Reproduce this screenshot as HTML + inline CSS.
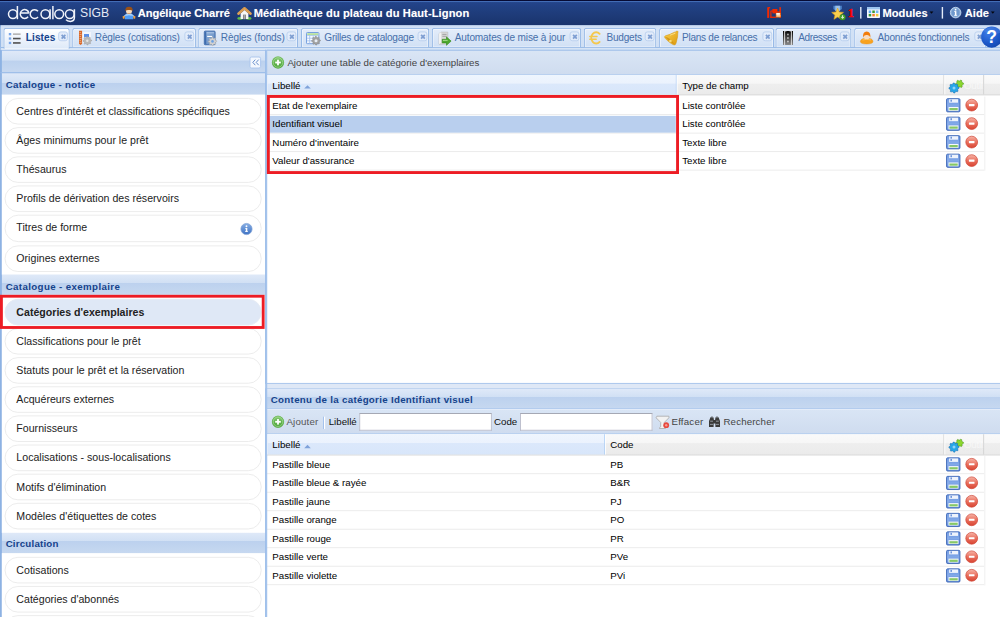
<!DOCTYPE html>
<html><head><meta charset="utf-8"><title>decalog SIGB</title>
<style>
*{box-sizing:border-box;margin:0;padding:0}
html,body{width:1000px;height:617px;overflow:hidden;background:#fff}
#w{position:absolute;left:0;top:0;width:1132px;height:699px;transform:scale(0.8834);transform-origin:0 0;font-family:"Liberation Sans",sans-serif;font-size:11px;color:#000;overflow:hidden;background:#fff}
#w div,#w span,#w svg,#w i{position:absolute}
.nw{white-space:nowrap}
#top{left:0;top:0;width:1132px;height:30px;background:linear-gradient(#05082e 0,#080d3a 1px,#4672bc 1.15px,#3e66b0 2.2px,#26488e 2.6px,#23438a 3.4px,#1f3d7c 14px,#1a346c 28.9px)}
#top .t{color:#fff;font-weight:bold;font-size:12.6px;top:7.6px;white-space:nowrap;text-shadow:0 0 1px rgba(255,255,255,.35)}
#tabs{width:1132px;height:29px;border-left:1.2px solid #8db2e3;background:linear-gradient(#c3d7f1 0,#d3e2f6 2px,#cfdff4 100%)}
#tabs .strip{left:0;top:25px;width:1132px;height:4px;background:#dce8f8;border-top:1px solid #8db2e3}
.tab{top:3px;height:22px;border:1px solid #8db2e3;border-bottom:none;border-radius:3px 3px 0 0;background:linear-gradient(#e4edfa,#d0e0f5);color:#4870aa;font-size:11.4px;white-space:nowrap;box-shadow:inset 0 0 0 1px rgba(255,255,255,.6)}
.tab.on{background:linear-gradient(#ffffff,#edf3fc 50%,#dde9f8);height:24px;color:#15428b;font-weight:bold}
.tab span{top:4.3px}
.tab i{top:3px;right:1px;width:11px;height:11px;border:1px solid #b9cfee;border-radius:3px;background:#e3ecfa}
.tab i:before,.tab i:after{content:"";position:absolute;left:1.5px;top:3.5px;width:6px;height:2px;background:#7f9fd2;transform:rotate(45deg)}
.tab i:after{transform:rotate(-45deg)}
.ph{background:linear-gradient(#dfe9f8 0,#d1e0f4 var(--b,41%),#bcd1ee calc(var(--b,41%) + 2%),#c6d8f0 100%);border:1px solid #99bbe8;color:#15428b;font-weight:bold;font-size:11px}
.ph span{white-space:nowrap}
.mi{border:1.8px solid #e9e9e9;background:#fff;font-size:12px;color:#222}
.mi span{left:12.3px;white-space:nowrap}
.tb{background:linear-gradient(#d9e5f5,#cfdcef);border-bottom:1px solid #94b8e8;color:#333}
.hd{background:linear-gradient(#fafafa 0,#f6f6f6 43%,#eeeeee 46%,#ebebeb 100%);border-bottom:1px solid #d0d0d0;font-size:11px}
.hc{top:0;height:100%;overflow:hidden;border-right:1px solid #d0d0d0;border-left:1px solid #fff}
.hc.s{background:linear-gradient(#eef5fe 0,#ebf2fd 43%,#dbe8fb 45%,#d8e6fa 100%);border-right-color:#aaccf6}
.hc span{top:5.7px;white-space:nowrap}
.row{border-bottom:1px solid #e9e9e9;font-size:11px}
.row span{top:4.1px;white-space:nowrap}
.row .selc{background:#b9cfee}
.inp{background:#fff;border:1px solid #b5b8c8;border-top-color:#9a9dab}
</style></head><body><div id="w">
<div id="top">
<div class="t" style="left:155.8px;letter-spacing:-0.027px">Angélique Charré</div>
<div class="t" style="left:287.2px;letter-spacing:0.113px">Médiathèque du plateau du Haut-Lignon</div>
<div class="t" style="left:998.9px;letter-spacing:0.041px">Modules</div>
<div class="t" style="left:1092.0px;letter-spacing:0.079px">Aide</div>
<div class="nw" style="left:90.6px;top:7.4px;font-size:13.8px;color:#e4e9f5;letter-spacing:0">SIGB</div>
</div>
<div id="tabs" style="left:0px;top:28px;transform:translate(0.00px,0.41px);"><div class="strip"></div>
<div class="tab on" style="left:2px;transform:translate(0.88px,.2px);width:75px"><span style="left:24.4px;letter-spacing:0.074px">Listes</span><i></i></div>
<div class="tab" style="left:80px;transform:translate(0.76px,.2px);width:140px"><span style="left:24.6px;letter-spacing:-0.194px">Règles (cotisations)</span><i></i></div>
<div class="tab" style="left:223px;transform:translate(0.39px,.2px);width:113px"><span style="left:24.6px;letter-spacing:-0.121px">Règles (fonds)</span><i></i></div>
<div class="tab" style="left:339px;transform:translate(0.76px,.2px);width:145px"><span style="left:25.4px;letter-spacing:-0.276px">Grilles de catalogage</span><i></i></div>
<div class="tab" style="left:487px;transform:translate(0.82px,.2px);width:169px"><span style="left:25.0px;letter-spacing:-0.179px">Automates de mise à jour</span><i></i></div>
<div class="tab" style="left:659px;transform:translate(0.88px,.2px);width:82px"><span style="left:24.6px;letter-spacing:-0.251px">Budgets</span><i></i></div>
<div class="tab" style="left:745px;transform:translate(0.12px,.2px);width:130px"><span style="left:25.0px;letter-spacing:-0.323px">Plans de relances</span><i></i></div>
<div class="tab" style="left:876px;transform:translate(0.77px,.2px);width:86px"><span style="left:24.9px;letter-spacing:-0.493px">Adresses</span><i></i></div>
<div class="tab" style="left:965px;transform:translate(0.97px,.2px);width:149px"><span style="left:25.4px;letter-spacing:-0.255px">Abonnés fonctionnels</span><i></i></div>
</div>
<div style="left:0px;top:56px;transform:translate(0.00px,0.49px);width:301px;height:657px;border-left:2.3px solid #8db2e3;border-right:1.4px solid #99bbe8;background:#fff"></div>
<div class="ph" style="--b:45%;left:0px;top:56px;transform:translate(0.00px,0.49px);width:301px;height:26px;border-left:2.3px solid #8db2e3"></div>
<div class="ph" style="--b:45%;left:0px;top:82px;transform:translate(0.00px,0.07px);width:301px;height:25px;border-left:2.3px solid #8db2e3;border-bottom:none"><span style="top:6.70px;left:4.4px;letter-spacing:0.350px">Catalogue - notice</span></div>
<div class="mi" style="left:5px;top:110px;transform:translate(0.21px,0.94px);width:291px;height:30px;border-radius:15.0px;"><span style="top:7.37px">Centres d'intérêt et classifications spécifiques</span></div>
<div class="mi" style="left:5px;top:143px;transform:translate(0.21px,0.96px);width:291px;height:30px;border-radius:15.0px;"><span style="top:7.37px">Âges minimums pour le prêt</span></div>
<div class="mi" style="left:5px;top:176px;transform:translate(0.21px,0.98px);width:291px;height:30px;border-radius:15.0px;"><span style="top:7.37px">Thésaurus</span></div>
<div class="mi" style="left:5px;top:209px;transform:translate(0.21px,1.00px);width:291px;height:30px;border-radius:15.0px;"><span style="top:7.37px">Profils de dérivation des réservoirs</span></div>
<div class="mi" style="left:5px;top:243px;transform:translate(0.21px,0.04px);width:291px;height:31px;border-radius:15.5px;"><span style="top:7.37px">Titres de forme</span></div>
<div class="mi" style="left:5px;top:277px;transform:translate(0.21px,0.85px);width:291px;height:30px;border-radius:15.0px;"><span style="top:7.37px">Origines externes</span></div>
<div class="ph" style="--b:40%;left:0px;top:310px;transform:translate(0.00px,0.73px);width:301px;height:23px;border-left:2.3px solid #8db2e3;border-top:none;border-bottom:none"><span style="top:7.13px;left:4.4px;letter-spacing:0.422px">Catalogue - exemplaire</span></div>
<div class="mi" style="left:5px;top:338px;transform:translate(0.21px,0.35px);width:291px;height:30px;border-radius:15.0px;background:#dfe8f6;font-weight:bold;border-color:#e6ebf3;"><span style="top:7.37px">Catégories d'exemplaires</span></div>
<div class="mi" style="left:5px;top:371px;transform:translate(0.21px,0.34px);width:291px;height:30px;border-radius:15.0px;"><span style="top:7.37px">Classifications pour le prêt</span></div>
<div class="mi" style="left:5px;top:404px;transform:translate(0.21px,0.32px);width:291px;height:30px;border-radius:15.0px;"><span style="top:7.37px">Statuts pour le prêt et la réservation</span></div>
<div class="mi" style="left:5px;top:437px;transform:translate(0.21px,0.31px);width:291px;height:30px;border-radius:15.0px;"><span style="top:7.37px">Acquéreurs externes</span></div>
<div class="mi" style="left:5px;top:470px;transform:translate(0.21px,0.30px);width:291px;height:30px;border-radius:15.0px;"><span style="top:7.37px">Fournisseurs</span></div>
<div class="mi" style="left:5px;top:503px;transform:translate(0.21px,0.28px);width:291px;height:30px;border-radius:15.0px;"><span style="top:7.37px">Localisations - sous-localisations</span></div>
<div class="mi" style="left:5px;top:536px;transform:translate(0.21px,0.27px);width:291px;height:30px;border-radius:15.0px;"><span style="top:7.37px">Motifs d'élimination</span></div>
<div class="mi" style="left:5px;top:569px;transform:translate(0.21px,0.26px);width:291px;height:30px;border-radius:15.0px;"><span style="top:7.37px">Modèles d'étiquettes de cotes</span></div>
<div class="ph" style="--b:40%;left:0px;top:603px;transform:translate(0.00px,0.12px);width:301px;height:23px;border-left:2.3px solid #8db2e3;border-top:none;border-bottom:none"><span style="top:5.89px;left:4.4px;letter-spacing:0.231px">Circulation</span></div>
<div class="mi" style="left:5px;top:630px;transform:translate(0.21px,0.41px);width:291px;height:30px;border-radius:15.0px;"><span style="top:7.37px">Cotisations</span></div>
<div class="mi" style="left:5px;top:663px;transform:translate(0.21px,0.39px);width:291px;height:30px;border-radius:15.0px;"><span style="top:7.37px">Catégories d'abonnés</span></div>
<div class="mi" style="left:5px;top:696px;transform:translate(0.21px,0.38px);width:291px;height:30px;border-radius:15.0px;"><span style="top:7.37px"></span></div>
<div style="left:300px;top:56px;transform:translate(0.54px,0.49px);width:838px;height:378px;border-left:1.5px solid #99bbe8;border-bottom:1px solid #99bbe8"></div>
<div class="tb" style="left:302px;top:56px;transform:translate(0.01px,0.26px);width:838px;height:29px;border-top:1px solid #8db2e3"><span class="nw" style="left:23.3px;top:7.7px;font-size:11px;color:#444">Ajouter une table de catégorie d'exemplaires</span></div>
<div class="hd" style="left:302px;top:84px;transform:translate(0.01px,0.90px);width:838px;height:23px;">
<div class="hc s" style="left:0.00px;width:464.46px"><span style="left:5.31px">Libellé</span></div>
<div class="hc" style="left:464.46px;width:302.35px"><span style="left:4.85px">Type de champ</span></div>
<div class="hc" style="left:766.81px;width:45.51px"><span style="left:21.49px;color:#fff;opacity:.55;letter-spacing:-.3px">Outils</span></div>
</div>
<div class="row" style="left:302px;top:109px;transform:translate(0.01px,0.24px);width:812px;height:21px;">
<span style="left:6.31px">Etat de l'exemplaire</span>
<span style="left:470.31px">Liste contrôlée</span>
</div>
<div class="row" style="left:302px;top:130px;transform:translate(0.01px,0.18px);width:812px;height:21px;">
<div class="selc" style="left:0;width:463.10px;top:1px;height:19px"></div>
<span style="left:6.31px">Identifiant visuel</span>
<span style="left:470.31px">Liste contrôlée</span>
</div>
<div class="row" style="left:302px;top:151px;transform:translate(0.01px,0.12px);width:812px;height:21px;">
<span style="left:6.31px">Numéro d'inventaire</span>
<span style="left:470.31px">Texte libre</span>
</div>
<div class="row" style="left:302px;top:172px;transform:translate(0.01px,0.06px);width:812px;height:21px;">
<span style="left:6.31px">Valeur d'assurance</span>
<span style="left:470.31px">Texte libre</span>
</div>
<div style="left:1114px;top:109px;transform:translate(0.33px,0.24px);height:84px;width:1px;background:#ededed"></div>
<div style="left:300px;top:434px;transform:translate(0.54px,0.57px);width:838px;height:5px;background:#dfe8f6"></div>
<div class="ph" style="left:300px;top:439px;transform:translate(0.54px,0.21px);width:838px;height:24px;border-left-width:1.5px;border-top-color:#b9d0ef"><span style="left:5px;top:5.79px;letter-spacing:0.342px">Contenu de la catégorie Identifiant visuel</span></div>
<div style="left:300px;top:463px;transform:translate(0.54px,0.66px);width:838px;height:243px;border-left:1.5px solid #99bbe8"></div>
<div class="tb" style="left:302px;top:463px;transform:translate(0.01px,0.66px);width:838px;height:28px;">
<span class="nw" style="left:22.27px;top:7.9px;color:#555;letter-spacing:0.196px">Ajouter</span>
<div style="left:63.62px;top:7.5px;width:2px;height:14px;background:linear-gradient(90deg,#8eb4ea 50%,#fff 50%)"></div>
<span class="nw" style="left:70.04px;top:7.9px;color:#111">Libellé</span>
<div class="inp" style="left:104px;top:3px;transform:translate(0.71px,0.85px);width:150px;height:20px;"></div>
<span class="nw" style="left:257.15px;top:7.9px;color:#111">Code</span>
<div class="inp" style="left:286px;top:3px;transform:translate(0.62px,0.85px);width:150px;height:20px;"></div>
<span class="nw" style="left:458.08px;top:7.9px;color:#444;letter-spacing:0.225px">Effacer</span>
<span class="nw" style="left:516.95px;top:7.9px;color:#444;letter-spacing:0.155px">Rechercher</span>
</div>
<div class="hd" style="left:302px;top:491px;transform:translate(0.01px,0.51px);width:838px;height:24px;">
<div class="hc s" style="left:0.00px;width:383.18px"><span style="left:5.31px">Libellé</span></div>
<div class="hc" style="left:383.18px;width:383.63px"><span style="left:4.63px">Code</span></div>
<div class="hc" style="left:766.81px;width:45.51px"><span style="left:21.49px;color:#fff;opacity:.55;letter-spacing:-.3px">Outils</span></div>
</div>
<div class="row" style="left:302px;top:515px;transform:translate(0.01px,0.73px);width:812px;height:21px;">
<span style="left:6.31px">Pastille bleue</span>
<span style="left:388.80px">PB</span>
</div>
<div class="row" style="left:302px;top:536px;transform:translate(0.01px,0.68px);width:812px;height:21px;">
<span style="left:6.31px">Pastille bleue &amp; rayée</span>
<span style="left:388.80px">B&amp;R</span>
</div>
<div class="row" style="left:302px;top:557px;transform:translate(0.01px,0.62px);width:812px;height:21px;">
<span style="left:6.31px">Pastille jaune</span>
<span style="left:388.80px">PJ</span>
</div>
<div class="row" style="left:302px;top:578px;transform:translate(0.01px,0.56px);width:812px;height:21px;">
<span style="left:6.31px">Pastille orange</span>
<span style="left:388.80px">PO</span>
</div>
<div class="row" style="left:302px;top:599px;transform:translate(0.01px,0.50px);width:812px;height:21px;">
<span style="left:6.31px">Pastille rouge</span>
<span style="left:388.80px">PR</span>
</div>
<div class="row" style="left:302px;top:620px;transform:translate(0.01px,0.44px);width:812px;height:21px;">
<span style="left:6.31px">Pastille verte</span>
<span style="left:388.80px">PVe</span>
</div>
<div class="row" style="left:302px;top:641px;transform:translate(0.01px,0.39px);width:812px;height:21px;">
<span style="left:6.31px">Pastille violette</span>
<span style="left:388.80px">PVi</span>
</div>
<div style="left:1114px;top:515px;transform:translate(0.33px,0.73px);height:147px;width:1px;background:#ededed"></div>
<div style="left:300px;top:56px;transform:translate(0.49px,0.49px);height:651px;width:2px;background:#a4c3ec"></div>
</div>
<svg id="ov" viewBox="0 0 1000 617" style="position:absolute;left:0;top:0;width:1000px;height:617px">

<defs>
<linearGradient id="gAdd" x1="0" y1="0" x2="0" y2="1"><stop offset="0" stop-color="#8fcf7c"/><stop offset=".5" stop-color="#62b44e"/><stop offset="1" stop-color="#4ea53a"/></linearGradient>
<linearGradient id="gDel" x1="0" y1="0" x2="0" y2="1"><stop offset="0" stop-color="#f7b5a8"/><stop offset=".5" stop-color="#ea705e"/><stop offset="1" stop-color="#d84432"/></linearGradient>
<linearGradient id="gSave" x1="0" y1="0" x2="0" y2="1"><stop offset="0" stop-color="#6390de"/><stop offset=".5" stop-color="#82a9e8"/><stop offset="1" stop-color="#4d7bd0"/></linearGradient>
<linearGradient id="gRoad" x1="0" y1="0" x2="0" y2="1"><stop offset="0" stop-color="#050505"/><stop offset="1" stop-color="#8a8a8a"/></linearGradient>
<radialGradient id="gHelp" cx=".35" cy=".3" r=".9"><stop offset="0" stop-color="#3f7ee8"/><stop offset=".55" stop-color="#1b57c8"/><stop offset="1" stop-color="#0f3fa0"/></radialGradient>
<linearGradient id="gBook" x1="0" y1="0" x2="1" y2="1"><stop offset="0" stop-color="#93b3dc"/><stop offset="1" stop-color="#5f88be"/></linearGradient>
<linearGradient id="gBell" x1="0" y1="0" x2="1" y2="1"><stop offset="0" stop-color="#fbd04a"/><stop offset="1" stop-color="#dc9a10"/></linearGradient>
<linearGradient id="gInfo" x1="0" y1="0" x2="0" y2="1"><stop offset="0" stop-color="#86aee4"/><stop offset="1" stop-color="#3f73c4"/></linearGradient>
<g id="add"><circle cx="0" cy="0" r="6" fill="url(#gAdd)"/><circle cx="0" cy="0" r="5.7" fill="none" stroke="#5fae4c" stroke-width=".7" opacity=".8"/><circle cx="0" cy="0" r="4.75" fill="none" stroke="#b4e2a6" stroke-width=".55"/><rect x="-2.8" y="-.9" width="5.6" height="1.8" fill="#fff"/><rect x="-.9" y="-2.8" width="1.8" height="5.6" fill="#fff"/></g>
<g id="save"><rect x=".45" y=".45" width="13.4" height="13.2" rx="1.1" fill="url(#gSave)" stroke="#3d66b6" stroke-width=".9"/><rect x="1.3" y="1.2" width="1.3" height="11.6" fill="#8fb2ec" opacity=".7"/><rect x="3" y="1" width="9" height="3.5" fill="#eef3fc"/><rect x="4.4" y="1.5" width="1.4" height="2" fill="#5f8ad8"/><rect x="2.4" y="8.7" width="10" height="4" fill="#f6f8fb"/><rect x="3.3" y="9.8" width="8.3" height="2.2" fill="#86c866"/></g>
<g id="del"><circle cx="0" cy="0" r="5.9" fill="url(#gDel)" stroke="#cf4434" stroke-width=".7"/><rect x="-2.8" y="-1.15" width="5.6" height="2.2" rx=".4" fill="#fff"/></g>
<g id="cog"><polygon points="15.02,3.52 15.09,4.56 13.94,5.26 13.59,5.97 13.74,7.31 12.87,7.89 11.69,7.24 10.90,7.29 9.81,8.09 8.88,7.63 8.84,6.28 8.41,5.63 7.18,5.08 7.11,4.04 8.26,3.34 8.61,2.63 8.46,1.29 9.33,0.71 10.51,1.36 11.30,1.31 12.39,0.51 13.32,0.97 13.36,2.32 13.79,2.97" fill="#8cd62e" stroke="#3f8c12" stroke-width=".5"/><polygon points="10.64,7.65 10.69,8.65 9.48,9.37 9.22,10.11 9.70,11.44 9.02,12.18 7.66,11.83 6.95,12.17 6.35,13.44 5.35,13.49 4.63,12.28 3.89,12.02 2.56,12.50 1.82,11.82 2.17,10.46 1.83,9.75 0.56,9.15 0.51,8.15 1.72,7.43 1.98,6.69 1.50,5.36 2.18,4.62 3.54,4.97 4.25,4.63 4.85,3.36 5.85,3.31 6.57,4.52 7.31,4.78 8.64,4.30 9.38,4.98 9.03,6.34 9.37,7.05" fill="#27a6e8" stroke="#1667a8" stroke-width=".5"/><circle cx="5.6" cy="8.4" r="1.5" fill="#8fd4f6"/></g>
</defs>
<g fill="none" stroke="#f0f3fa" stroke-width="1.5" stroke-linecap="butt">
<circle cx="12.9" cy="14.1" r="4.4"/><path d="M17.4,6 V19.2"/>
<path d="M20.1,12.9 H28.9 M28.9,12.9 A4.4,4.4 0 1 0 28.1,16.7" />
<path d="M38,11.3 A4.4,4.4 0 1 0 38,16.9"/>
<circle cx="45.4" cy="14.1" r="4.4"/><path d="M50.1,9.3 V19.2"/>
<path d="M52.9,6 V19.2"/>
<circle cx="59.2" cy="14.1" r="4.4"/>
<circle cx="69.8" cy="14.1" r="4.4"/><path d="M74.4,9.3 V17.6 Q74.4,21.4 70.4,21.4 Q67.2,21.4 66,19.6"/>
</g>
<path d="M124.8,19.2 Q124.6,13.4 129,13.4 Q133.4,13.4 133.2,19.2 Z" fill="#4f9df6"/><path d="M126,14.6 Q129,12.6 132,14.6 L131.5,16 Q129,14.6 126.5,16 Z" fill="#a9d2fc"/>
<path d="M127,13.9 L124,16.4 M131,13.9 L134,16.4" stroke="#9ccafa" stroke-width="1.3"/><rect x="122.7" y="15.9" width="2" height="2.9" rx=".7" fill="#f2a13c"/><rect x="133.3" y="15.9" width="2" height="2.9" rx=".7" fill="#f2a13c"/>
<circle cx="129" cy="11" r="3" fill="#f8dcba"/><path d="M125.3,11.2 Q124.9,6.8 129,6.8 Q133.1,6.8 132.7,11.2 Q131.6,9.7 129,10 Q126.4,9.7 125.3,11.2 Z" fill="#9a5016"/><path d="M127.3,13.2 h3.4 l-.4,.9 h-2.6 Z" fill="#c98a5a"/>
<ellipse cx="240.2" cy="18.4" rx="3" ry="1.3" fill="#5cbb48"/><ellipse cx="248.6" cy="18.4" rx="3" ry="1.3" fill="#5cbb48"/>
<path d="M240.6,19 V13.4 L244.5,10 L248.4,13.4 V19 Z" fill="#f6f6f6"/><rect x="243" y="14.6" width="3" height="4.6" fill="#8a8a8a"/><rect x="244.3" y="14.6" width=".5" height="4.6" fill="#c8c8c8"/>
<path d="M238.4,13.7 L244.5,8.3 L250.6,13.7" fill="none" stroke="#dfa256" stroke-width="2.5" stroke-linejoin="round" stroke-linecap="round"/><path d="M239.4,12.2 L244.5,7.7 L249.6,12.2" fill="none" stroke="#cf8f45" stroke-width=".6"/>
<g fill="#f22a00"><rect x="767.2" y="7.3" width="2" height="10.6"/><rect x="768.2" y="7.1" width="2" height="1.2"/><rect x="770.3" y="10.6" width="1.2" height="7.3"/><rect x="770.3" y="16.6" width="6" height="1.3"/><rect x="772.4" y="9" width="5" height="4.4"/><rect x="771.2" y="10.4" width="2" height="1.3"/><rect x="779.4" y="7.1" width="1.5" height="10.8"/><rect x="777" y="11.4" width="3" height="1.3"/></g>
<rect x="775.8" y="12.8" width="5" height="4.8" rx="1" fill="#f47a14"/><rect x="776.3" y="13.1" width="3.6" height="1.7" fill="#fff"/><rect x="776.5" y="15.4" width="3.8" height="1" fill="#fff"/>
<path d="M833.4,5.8 h8.4 v3.2 l-4.2,3.4 l-4.2,-3.4 Z" fill="#4f86cc"/><path d="M835.3,5.8 h4.6 v4.6 l-2.3,1.8 l-2.3,-1.8 Z" fill="#9cc0ea"/>
<polygon points="837.60,8.10 839.25,12.03 843.50,12.38 840.26,15.17 841.24,19.32 837.60,17.10 833.96,19.32 834.94,15.17 831.70,12.38 835.95,12.03" fill="#f9cf4e" stroke="#e3a21a" stroke-width=".6" stroke-linejoin="round"/>
<circle cx="842.6" cy="17.2" r="2.9" fill="#46a22a" stroke="#2c7c14" stroke-width=".4"/><path d="M842.6,15.3 v2.4 M841.4,16.9 l1.2,1.5 l1.2,-1.5" stroke="#fff" stroke-width=".9" fill="none"/>
<text x="847.7" y="17.1" font-family="Liberation Serif,serif" font-weight="bold" font-size="12.2" fill="#ff0000" stroke="#ff0000" stroke-width=".35">1</text>
<rect x="860.1" y="7" width="1.4" height="11.6" fill="#e4ecf9"/><rect x="941.7" y="7" width="1.4" height="11.6" fill="#e4ecf9"/>
<rect x="867" y="7" width="13" height="11" rx=".8" fill="#f3f7fd"/><rect x="867" y="7" width="13" height="2.4" fill="#9cc4f0"/>
<rect x="868.7" y="10.5" width="2.5" height="2.5" fill="#5aaaf2"/>
<rect x="872.3" y="10.5" width="2.5" height="2.5" fill="#3a9a36"/>
<rect x="875.9" y="10.5" width="2.5" height="2.5" fill="#74baf6"/>
<rect x="868.7" y="13.9" width="2.5" height="2.5" fill="#3a9a36"/>
<rect x="872.3" y="13.9" width="2.5" height="2.5" fill="#f4802c"/>
<rect x="875.9" y="13.9" width="2.5" height="2.5" fill="#f2cc36"/>
<polygon points="929.6,11.5 933.4,11.5 931.5,13.7" fill="#05070f"/><polygon points="990.9,11.5 994.7,11.5 992.8,13.7" fill="#05070f"/>
<circle cx="955.6" cy="12.6" r="5.3" fill="#8db0da" stroke="#c4d8f0" stroke-width=".9"/><circle cx="955.6" cy="12.6" r="3.9" fill="#6f98cc"/><rect x="954.9" y="11.2" width="1.5" height="4.3" fill="#fff"/><rect x="954.2" y="11.2" width="1.4" height=".8" fill="#fff"/><rect x="954.1" y="14.9" width="3.1" height=".8" fill="#fff"/><circle cx="955.6" cy="9.7" r=".9" fill="#fff"/>
<rect x="8.8" y="33.0" width="2.4" height="2.3" fill="#78a6ea"/><rect x="13" y="33.35" width="7.6" height="1.6" fill="#b4b4b4"/>
<rect x="8.8" y="37.4" width="2.4" height="2.3" fill="#78a6ea"/><rect x="13" y="37.75" width="7.6" height="1.6" fill="#505050"/>
<rect x="8.8" y="41.8" width="2.4" height="2.3" fill="#78a6ea"/><rect x="13" y="42.15" width="7.6" height="1.6" fill="#505050"/>
<path d="M79,30.8 h3.1 v13 l-1.5,1.2 l-1.6,-1.2 Z" fill="#d9692a"/><path d="M79.6,32.5 h1.3 M79.6,34.5 h1.9 M79.6,36.5 h1.3 M79.6,38.5 h1.9 M79.6,40.5 h1.3 M79.6,42.3 h1.9" stroke="#f6d2b8" stroke-width=".6"/>
<rect x="82.5" y="32" width="8.4" height="10.4" fill="#f4f7fc"/><rect x="84" y="34" width="5" height="3.2" fill="#5b90ea"/>
<polygon points="91.55,40.07 91.59,40.91 90.40,41.48 90.19,42.07 90.75,43.26 90.19,43.89 88.95,43.44 88.38,43.71 87.93,44.95 87.09,44.99 86.52,43.80 85.93,43.59 84.74,44.15 84.11,43.59 84.56,42.35 84.29,41.78 83.05,41.33 83.01,40.49 84.20,39.92 84.41,39.33 83.85,38.14 84.41,37.51 85.65,37.96 86.22,37.69 86.67,36.45 87.51,36.41 88.08,37.60 88.67,37.81 89.86,37.25 90.49,37.81 90.04,39.05 90.31,39.62" fill="#b9b9b9" stroke="#9a9a9a" stroke-width=".5"/><circle cx="87.3" cy="40.7" r="1.2" fill="#e6e6e6"/>
<rect x="204.3" y="31.1" width="10.8" height="13.6" rx=".9" fill="url(#gBook)" stroke="#3b68a8" stroke-width=".9"/><rect x="204.7" y="31.5" width="1.6" height="12.8" fill="#3f6db0"/><path d="M206.6,32.8 h7.4" stroke="#b9d0ee" stroke-width=".8"/><rect x="207.2" y="35.9" width="5" height="1.1" fill="#fff"/>
<polygon points="216.75,40.77 216.79,41.61 215.51,42.15 215.30,42.73 215.95,43.96 215.39,44.59 214.09,44.06 213.54,44.32 213.13,45.65 212.29,45.69 211.75,44.41 211.17,44.20 209.94,44.85 209.31,44.29 209.84,42.99 209.58,42.44 208.25,42.03 208.21,41.19 209.49,40.65 209.70,40.07 209.05,38.84 209.61,38.21 210.91,38.74 211.46,38.48 211.87,37.15 212.71,37.11 213.25,38.39 213.83,38.60 215.06,37.95 215.69,38.51 215.16,39.81 215.42,40.36" fill="#d2d2d2" stroke="#a8a8a8" stroke-width=".5"/><circle cx="212.5" cy="41.4" r="1.3" fill="#6aa0e2"/>
<rect x="306.5" y="32.5" width="12.4" height="11.2" rx=".8" fill="#eef4fd" stroke="#77a1e0" stroke-width="1"/><rect x="307.2" y="33.2" width="11" height="2" fill="#b6df9e"/><path d="M307,35.6 h11.4 M307,38.2 h11.4 M307,40.8 h11.4 M309.6,35.6 v8 M313.2,35.6 v8" stroke="#9fbfec" stroke-width=".7"/>
<g fill="#fff"><rect x="308" y="36.3" width="1" height="1"/><rect x="310.6" y="36.3" width="2" height="1"/><rect x="314.2" y="36.3" width="1" height="1"/><rect x="308" y="39" width="1" height="1"/><rect x="310.6" y="39" width="1.6" height="1"/></g>
<polygon points="320.35,40.05 320.39,40.92 319.20,41.50 318.98,42.11 319.53,43.32 318.95,43.96 317.70,43.53 317.11,43.81 316.65,45.05 315.78,45.09 315.20,43.90 314.59,43.68 313.38,44.23 312.74,43.65 313.17,42.40 312.89,41.81 311.65,41.35 311.61,40.48 312.80,39.90 313.02,39.29 312.47,38.08 313.05,37.44 314.30,37.87 314.89,37.59 315.35,36.35 316.22,36.31 316.80,37.50 317.41,37.72 318.62,37.17 319.26,37.75 318.83,39.00 319.11,39.59" fill="#a2a2a2" stroke="#858585" stroke-width=".5"/><circle cx="316" cy="40.7" r="1.5" fill="#e8eef8"/>
<path d="M439,33.6 l2.2,-1.5 h6.6 v10.6 l-2.2,1.5 h-6.6 Z" fill="#d9d9d9" stroke="#b0b0b0" stroke-width=".5"/><path d="M439,33.6 l2.2,-1.5 v10.6 l-2.2,1.5 Z" fill="#f1f1f1"/><path d="M442.3,34.4 h4.2 M442.3,36.3 h4.2" stroke="#9c9c9c" stroke-width=".9"/>
<path d="M442.2,39.3 h4.3 v-2.4 l4.6,4.2 l-4.6,4.2 v-2.4 h-4.3 Z" fill="#4ea82e" stroke="#2e8614" stroke-width=".6" stroke-linejoin="round"/><path d="M443,40.4 h4.6" stroke="#a4dc8a" stroke-width="1"/>
<path d="M599.6,33.8 A4.9,5.6 0 1 0 599.6,41.9" fill="none" stroke="#f4c84e" stroke-width="1.9" stroke-linecap="round"/><path d="M589.8,36.4 h7.2 M589.8,39.2 h6.4" stroke="#f4c84e" stroke-width="1.5" stroke-linecap="round"/>
<path d="M675.9,31.9 Q676.3,30.6 677.4,31 Q678.6,31.6 677.8,33 Q677.9,37 676.6,41 Q676.2,43.4 675.4,44.5 Q674.6,45.2 673,44.6 L669.8,42.6 L666.6,39.8 Q664.6,38 664.4,36.8 Q664.8,36 666,35.6 Q670,34.6 673.6,32.6 Q675,31.8 675.9,31.9 Z" fill="url(#gBell)" stroke="#d09412" stroke-width=".5"/>
<path d="M665,37.1 Q668.5,41.6 674.7,44.3 Q672.4,41 669.6,38.8 Q667,36.8 665,37.1 Z" fill="#c98c12" opacity=".75"/><circle cx="670.4" cy="41" r="1.35" fill="#f9dc78"/><path d="M670,35.2 Q673,34 675.4,33.2" stroke="#fde9a0" stroke-width=".9" fill="none" opacity=".8"/>
<rect x="783" y="31" width="10" height="14" fill="url(#gRoad)"/><rect x="784.2" y="31" width=".9" height="14" fill="#eaeaea"/><rect x="790.9" y="31" width=".9" height="14" fill="#eaeaea"/><rect x="787.4" y="33.7" width="1.1" height="1.6" fill="#fff"/><rect x="787.4" y="37.2" width="1.1" height="1.6" fill="#fff"/><rect x="787.4" y="40.7" width="1.1" height="1.6" fill="#fff"/><rect x="785.3" y="31" width="1" height=".6" fill="#eee"/><rect x="789.7" y="31" width="1" height=".6" fill="#eee"/>
<path d="M860.4,41.6 Q860.4,38.2 866.7,38.2 Q873,38.2 873,41.6 Q873,44 866.7,44 Q860.4,44 860.4,41.6 Z" fill="#f8a21e" stroke="#e88a10" stroke-width=".4"/><path d="M862.5,40 Q866.7,38.6 871,40" stroke="#fcc86a" stroke-width=".8" fill="none"/>
<circle cx="866.7" cy="36.4" r="2.9" fill="#f9dcc0"/><path d="M863,37.8 Q862.6,31.6 866.7,31.6 Q870.8,31.6 870.4,37.8 Q869.6,34.6 866.7,35 Q863.8,34.6 863,37.8 Z" fill="#f27c0a"/>
<circle cx="991.7" cy="37.1" r="10.6" fill="url(#gHelp)"/><path d="M983,31 Q991,24 1000,29 L1000,33 Q991,36 983,31 Z" fill="#5b93ee" opacity=".35"/>
<text x="991.7" y="43.4" text-anchor="middle" font-family="Liberation Sans,sans-serif" font-weight="bold" font-size="17.5" fill="#fff">?</text>
<rect x="250" y="57" width="10.6" height="11" rx="1.6" fill="#f4f8fe" stroke="#a9c4ec" stroke-width=".9"/><path d="M255.3,59.6 L252.8,62.4 L255.3,65.2 M258.7,59.6 L256.2,62.4 L258.7,65.2" fill="none" stroke="#6a90cc" stroke-width="1"/>
<use href="#add" x="278" y="62.5"/><use href="#add" x="278" y="421.8"/>
<polygon points="304.2,88.6 310.8,88.6 307.5,85.2" fill="#7fa2da"/><polygon points="304.2,448.2 310.8,448.2 307.5,444.8" fill="#7fa2da"/>
<use href="#save" x="946.1" y="98.20"/><use href="#del" x="971.7" y="105.10"/>
<use href="#save" x="946.1" y="116.70"/><use href="#del" x="971.7" y="123.60"/>
<use href="#save" x="946.1" y="135.20"/><use href="#del" x="971.7" y="142.10"/>
<use href="#save" x="946.1" y="153.70"/><use href="#del" x="971.7" y="160.60"/>
<use href="#save" x="946.1" y="457.40"/><use href="#del" x="971.7" y="464.30"/>
<use href="#save" x="946.1" y="475.90"/><use href="#del" x="971.7" y="482.80"/>
<use href="#save" x="946.1" y="494.40"/><use href="#del" x="971.7" y="501.30"/>
<use href="#save" x="946.1" y="512.90"/><use href="#del" x="971.7" y="519.80"/>
<use href="#save" x="946.1" y="531.40"/><use href="#del" x="971.7" y="538.30"/>
<use href="#save" x="946.1" y="549.90"/><use href="#del" x="971.7" y="556.80"/>
<use href="#save" x="946.1" y="568.40"/><use href="#del" x="971.7" y="575.30"/>
<use href="#cog" x="948.4" y="79.6"/><use href="#cog" x="948.4" y="438.7"/>
<circle cx="246.5" cy="229" r="5.6" fill="url(#gInfo)" stroke="#7c9fd4" stroke-width=".7"/><rect x="245.8" y="228" width="1.5" height="3.9" fill="#fff"/><rect x="245.2" y="228" width="1.2" height=".7" fill="#fff"/><rect x="245" y="231.3" width="3" height=".7" fill="#fff"/><circle cx="246.5" cy="226.3" r=".95" fill="#fff"/>
<path d="M656.9,416.2 h12 v1.6 l-4.6,4.6 v4.4 l1.2,.9 v.8 h-6 v-.8 l1.2,-.9 v-4.4 l-4.6,-4.6 Z" fill="#f2f2f2" stroke="#a8a8a8" stroke-width=".8" stroke-linejoin="round"/><circle cx="666.2" cy="425.2" r="2.9" fill="#e8483c"/><circle cx="666.2" cy="425.2" r="1.2" fill="#f49a90"/>
<g fill="#3a3a3a"><path d="M709,421 l1.2,-3 q.3,-1.6 1.8,-1.6 q1.4,0 1.6,1.6 l.3,2 h1.2 l.3,-2 q.2,-1.6 1.6,-1.6 q1.5,0 1.8,1.6 l1.2,3 v6 h-4.6 v-3.6 h-1.8 v3.6 h-4.6 Z"/></g><path d="M710.2,421.2 h2.8 M716,421.2 h2.8 M710,424.4 h3 M716,424.4 h3" stroke="#9aa0a8" stroke-width=".9"/><path d="M711.3,417.6 h1.6 M716.2,417.6 h1.6" stroke="#8c95a0" stroke-width=".8"/>
<rect x="1.43" y="296.23" width="261.75" height="31.25" fill="none" stroke="#ed1c24" stroke-width="2.85"/>
<rect x="268.35" y="96.45" width="409.20" height="76.10" fill="none" stroke="#ed1c24" stroke-width="2.9"/>
</svg>
</body></html>
